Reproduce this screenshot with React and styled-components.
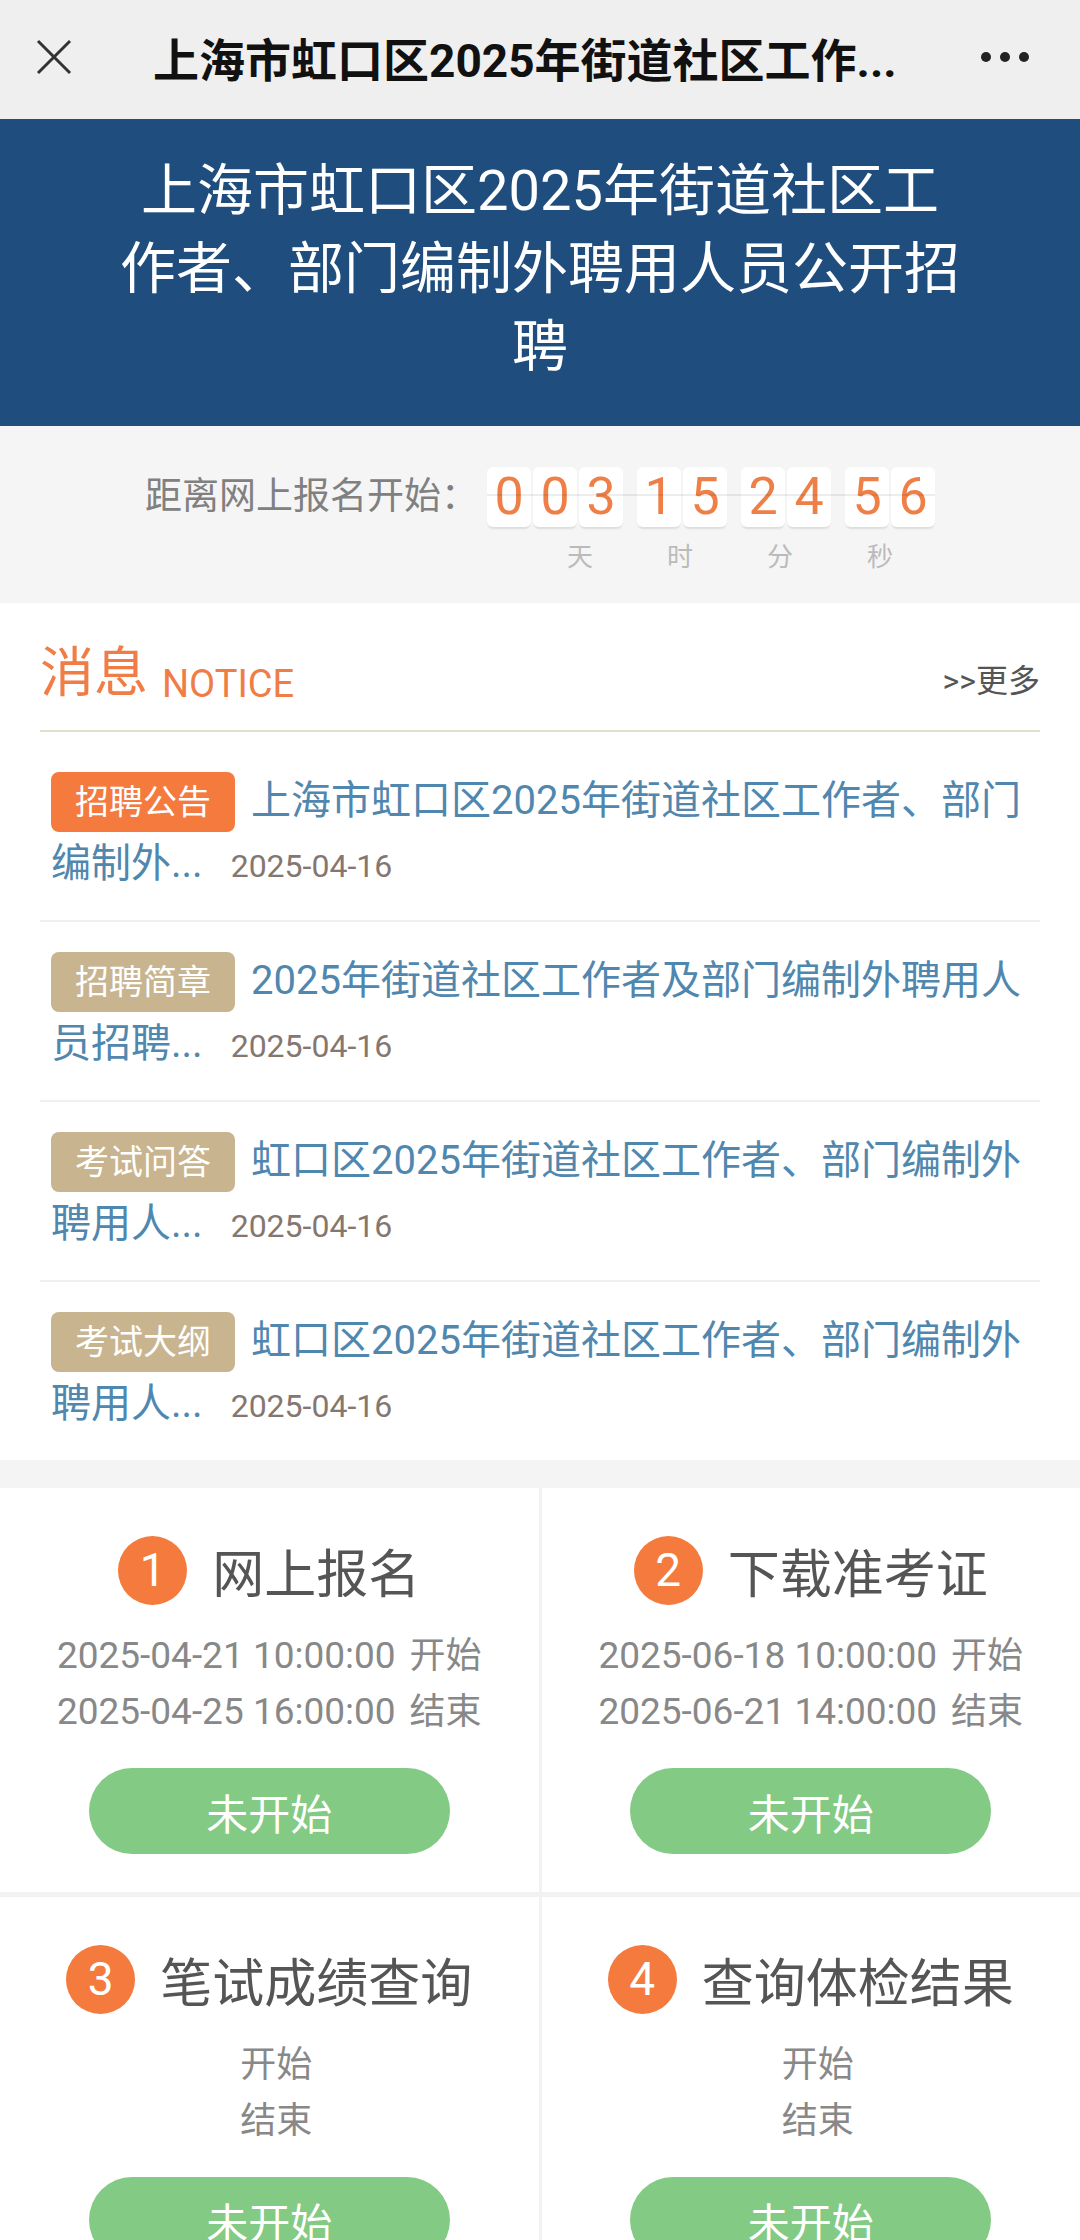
import React from 'react';
import styled, { createGlobalStyle } from 'styled-components';

const GlobalStyle = createGlobalStyle`
  body {
    margin: 0;
    background: #f4f4f4;
    font-family: Roboto, "Noto Sans CJK SC", sans-serif;
  }
`;

const notices = [
  { tag: '招聘公告', hot: true, title: '上海市虹口区2025年街道社区工作者、部门编制外...', date: '2025-04-16' },
  { tag: '招聘简章', title: '2025年街道社区工作者及部门编制外聘用人员招聘...', date: '2025-04-16' },
  { tag: '考试问答', title: '虹口区2025年街道社区工作者、部门编制外聘用人...', date: '2025-04-16' },
  { tag: '考试大纲', title: '虹口区2025年街道社区工作者、部门编制外聘用人...', date: '2025-04-16' },
];

const steps = [
  { no: 1, name: '网上报名', start: '2025-04-21 10:00:00', end: '2025-04-25 16:00:00' },
  { no: 2, name: '下载准考证', start: '2025-06-18 10:00:00', end: '2025-06-21 14:00:00' },
  { no: 3, name: '笔试成绩查询', start: '', end: '' },
  { no: 4, name: '查询体检结果', start: '', end: '' },
];

const clock = [['0', '0', '3'], ['1', '5'], ['2', '4'], ['5', '6']];

const App = () => {
  return (
    <>
      <GlobalStyle />
      <TopBar>
        <CloseIcon viewBox="0 0 36 36">
          <path d="M2 2 L34 34 M34 2 L2 34" />
        </CloseIcon>
        <BarTitle>上海市虹口区2025年街道社区工作...</BarTitle>
        <MoreDots>
          <Dot />
          <Dot />
          <Dot />
        </MoreDots>
      </TopBar>

      <Banner>
        <BannerTitle>上海市虹口区2025年街道社区工作者、部门编制外聘用人员公开招聘</BannerTitle>
      </Banner>

      <CountdownBar>
        <CountdownLabel>距离网上报名开始：</CountdownLabel>
        <Clock>
          <DigitRow>
            {clock.map((group, i) => (
              <DigitGroup key={i}>
                {group.map((d, j) => (
                  <Digit key={j}>{d}</Digit>
                ))}
              </DigitGroup>
            ))}
          </DigitRow>
          <UnitRow>
            <Unit>天</Unit>
            <Unit>时</Unit>
            <Unit>分</Unit>
            <Unit>秒</Unit>
          </UnitRow>
        </Clock>
      </CountdownBar>

      <NoticeSection>
        <NoticeHeader>
          <NoticeTitle>
            消息<NoticeEn>NOTICE</NoticeEn>
          </NoticeTitle>
          <MoreLink>&gt;&gt;更多</MoreLink>
        </NoticeHeader>
        <NoticeList>
          {notices.map((n, i) => (
            <NoticeItem key={i}>
              <Tag $hot={n.hot}>{n.tag}</Tag>
              {n.title}
              <ItemDate>{n.date}</ItemDate>
            </NoticeItem>
          ))}
        </NoticeList>
      </NoticeSection>

      <StepGrid>
        {steps.map((s) => (
          <StepCard key={s.no}>
            <StepHead>
              <StepNum>{s.no}</StepNum>
              <StepName>{s.name}</StepName>
            </StepHead>
            <StepTimes>
              <TimeLine>
                {s.start}
                <TimeLabel>开始</TimeLabel>
              </TimeLine>
              <TimeLine>
                {s.end}
                <TimeLabel>结束</TimeLabel>
              </TimeLine>
            </StepTimes>
            <StepButton>未开始</StepButton>
          </StepCard>
        ))}
      </StepGrid>
    </>
  );
};

const TopBar = styled.div`
  display: flex;
  align-items: center;
  height: 113px;
  padding: 0 51px 6px 36px;
  background: #efefef;
`;

const CloseIcon = styled.svg`
  width: 36px;
  height: 36px;
  flex: none;
  fill: none;
  stroke: #333;
  stroke-width: 3;
`;

const BarTitle = styled.div`
  flex: 1;
  margin-left: 81px;
  font-size: 46px;
  font-weight: 700;
  color: #111;
  white-space: nowrap;
  overflow: hidden;
  text-overflow: ellipsis;
`;

const MoreDots = styled.div`
  display: flex;
  gap: 9px;
  flex: none;
`;

const Dot = styled.span`
  width: 10px;
  height: 10px;
  border-radius: 50%;
  background: #222;
`;

const Banner = styled.div`
  background: #1f4e7e;
  padding: 33px 116px 40px;
`;

const BannerTitle = styled.h1`
  margin: 0;
  font-size: 56px;
  font-weight: 400;
  line-height: 78px;
  color: #fff;
  text-align: center;
`;

const CountdownBar = styled.div`
  display: flex;
  justify-content: center;
  align-items: flex-start;
  gap: 9px;
  padding: 41px 0 29px;
  background: #f5f5f5;
`;

const CountdownLabel = styled.div`
  font-size: 37px;
  line-height: 60px;
  color: #808080;
`;

const Clock = styled.div`
  display: flex;
  flex-direction: column;
`;

const DigitRow = styled.div`
  position: relative;
  display: flex;
  gap: 14px;

  &::after {
    content: '';
    position: absolute;
    left: 0;
    right: 0;
    top: 27px;
    height: 2px;
    background: rgba(0, 0, 0, 0.07);
  }
`;

const DigitGroup = styled.div`
  display: flex;
  gap: 2px;
`;

const Digit = styled.div`
  width: 44px;
  height: 60px;
  border-radius: 6px;
  background: #fff;
  box-shadow: 0 3px 2px -1px rgba(0, 0, 0, 0.1);
  font-family: Roboto, sans-serif;
  font-size: 52px;
  line-height: 60px;
  text-align: center;
  color: #ee7f47;
`;

const UnitRow = styled.div`
  display: flex;
  margin-top: 13px;
  padding-left: 43px;
`;

const Unit = styled.span`
  width: 100px;
  font-size: 26px;
  line-height: 34px;
  text-align: center;
  color: #bbb;
`;

const NoticeSection = styled.section`
  padding: 36px 40px 0;
  background: #fff;
`;

const NoticeHeader = styled.div`
  display: flex;
  justify-content: space-between;
  align-items: baseline;
  padding-bottom: 21px;
  border-bottom: 2px solid #e3dfcd;
`;

const NoticeTitle = styled.div`
  font-size: 54px;
  line-height: 70px;
  color: #ef7d45;
`;

const NoticeEn = styled.span`
  margin-left: 14px;
  font-size: 38px;
  line-height: 1;
  vertical-align: -5px;
`;

const MoreLink = styled.a`
  font-size: 32px;
  line-height: 1;
  color: #555;
  text-decoration: none;
`;

const NoticeList = styled.div`
  margin-top: 10px;
`;

const NoticeItem = styled.div`
  padding: 27px 6px 25px 11px;
  font-size: 40px;
  line-height: 63px;
  color: #5087ae;
  border-bottom: 2px solid #f0f0f0;

  &:last-child {
    border-bottom: none;
  }
`;

const Tag = styled.span`
  display: inline-block;
  vertical-align: top;
  height: 60px;
  margin: 3px 16px 0 0;
  padding: 0 24px;
  border-radius: 8px;
  font-size: 34px;
  line-height: 60px;
  color: #fff;
  background: ${(p) => (p.$hot ? '#f47a3d' : '#c8b48e')};
`;

const ItemDate = styled.span`
  margin-left: 28px;
  font-size: 32px;
  line-height: 1;
  color: #857670;
`;

const StepGrid = styled.div`
  display: grid;
  grid-template-columns: 1fr 1fr;
  gap: 5px 3px;
  margin-top: 28px;
  background: #f2f2f2;
`;

const StepCard = styled.div`
  display: flex;
  flex-direction: column;
  align-items: center;
  padding: 44px 0 38px;
  background: #fff;
`;

const StepHead = styled.div`
  display: flex;
  align-items: center;
  gap: 25px;
  height: 76px;
`;

const StepNum = styled.span`
  display: flex;
  align-items: center;
  justify-content: center;
  width: 69px;
  height: 69px;
  border-radius: 50%;
  background: #f47a3d;
  font-family: Roboto, sans-serif;
  font-size: 46px;
  color: #fff;
`;

const StepName = styled.span`
  font-size: 52px;
  color: #555;
`;

const StepTimes = styled.div`
  margin-top: 20px;
  text-align: center;
`;

const TimeLine = styled.div`
  font-size: 37px;
  line-height: 56px;
  color: #888;
`;

const TimeLabel = styled.span`
  margin-left: 14px;
  font-size: 36px;
  line-height: 1;
`;

const StepButton = styled.button`
  width: 361px;
  height: 86px;
  margin-top: 28px;
  border: none;
  border-radius: 43px;
  background: #83ca84;
  font-family: "Noto Sans CJK SC", sans-serif;
  font-size: 42px;
  color: #fff;
`;

export default App;
